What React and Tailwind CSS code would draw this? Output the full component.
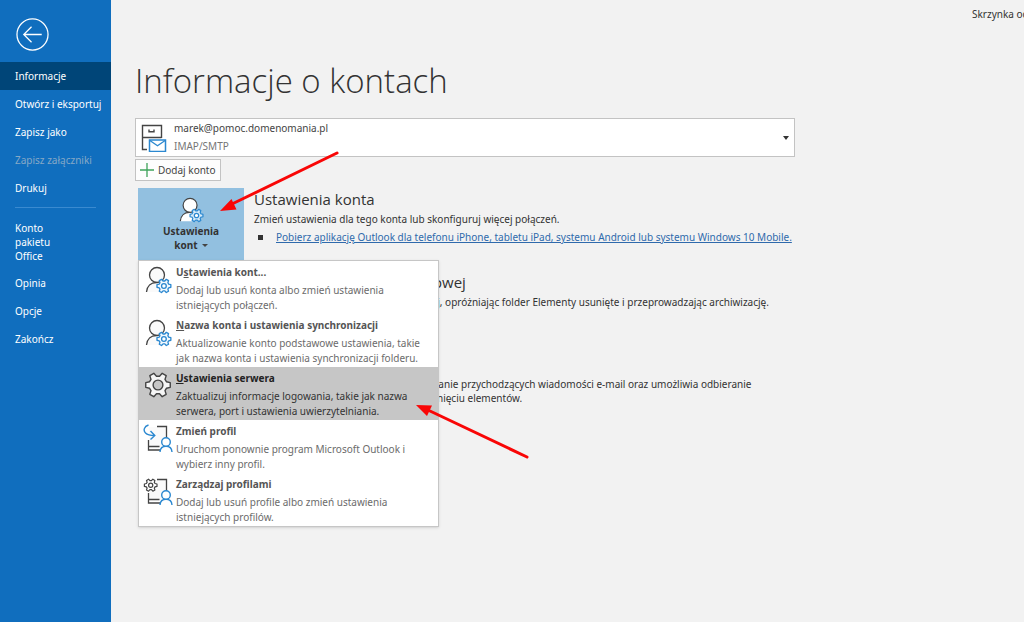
import React from 'react';

const navTop = [
  { label: 'Informacje', active: true },
  { label: 'Otwórz i eksportuj' },
  { label: 'Zapisz jako' },
  { label: 'Zapisz załączniki', disabled: true },
  { label: 'Drukuj' },
];

const navBottom = ['Opinia', 'Opcje', 'Zakończ'];

const GEAR =
  'M10 1.500h4l.8 3.300 2 1.200 3.200-1 2 3.400-2.500 2.300v2.600l2.500 2.300-2 3.400-3.200-1-2 1.200-.8 3.300h-4l-.8-3.300-2-1.200-3.200 1-2-3.400 2.500-2.300v-2.600L2 8.400 4 5l3.200 1 2-1.200z';

function PersonGearIcon({ className, fill, gearFill }) {
  return (
    <svg viewBox="-1 -1 28 30" className={className} fill="none" aria-hidden="true">
      <path d="M1.500 26C2 20 6 16.500 11.500 16.500c3 0 5 1 6.500 2.500v7z" fill={fill} />
      <circle cx="12" cy="9" r="7.500" fill={fill} stroke="#444" strokeWidth="1.300" />
      <path d="M1.500 26C2 20 6 16.500 11.500 16.500" stroke="#444" strokeWidth="1.300" />
      <g transform="translate(11 12) scale(.66) rotate(90 12 12)">
        <path d={GEAR} fill={gearFill} stroke="#2b88d0" strokeWidth="2" strokeLinejoin="round" />
        <circle cx="12" cy="12" r="3.600" fill="#fff" stroke="#2b88d0" strokeWidth="2" />
      </g>
    </svg>
  );
}

function GearIcon({ className }) {
  return (
    <svg viewBox="0 0 24 24" className={className} fill="none" aria-hidden="true">
      <g transform="rotate(90 12 12)">
        <path d={GEAR} fill="#f5f5f5" stroke="#444" strokeWidth="1.200" strokeLinejoin="round" />
        <circle cx="12" cy="12" r="4.200" fill="#c6c6c6" stroke="#444" strokeWidth="1.200" />
      </g>
    </svg>
  );
}

function ProfileIcon({ className, gear }) {
  return (
    <svg viewBox="0 0 30 30" className={className} fill="none" aria-hidden="true">
      <path d="M6 3h17v20H6z" fill="#fafafa" />
      <path d="M14 2.500h9.500V14M5.500 16v10h12M5.500 22.500h11" stroke="#444" strokeWidth="1.300" />
      {gear ? (
        <g transform="translate(.5 1) scale(.6) rotate(90 12 12)">
          <path d={GEAR} fill="#fff" stroke="#444" strokeWidth="2" strokeLinejoin="round" />
          <circle cx="12" cy="12" r="3.500" stroke="#444" strokeWidth="2" />
        </g>
      ) : (
        <path d="M5.500 1C1 2.500 0 6.500 2.500 9c2 2 5.500 2.500 9 2.500M7.500 7l4.300 4.500-4.300 4" stroke="#2b88d0" strokeWidth="1.400" />
      )}
      <path d="M17 28c.3-3.800 2.800-5.700 6-5.700s5.700 1.900 6 5.700" fill="#fff" stroke="#2b88d0" strokeWidth="1.400" />
      <circle cx="23" cy="18" r="4.300" fill="#fff" stroke="#2b88d0" strokeWidth="1.400" />
    </svg>
  );
}

const menuItems = [
  {
    title: 'Ustawienia kont...',
    accessIndex: 1,
    text: ['Dodaj lub usuń konta albo zmień ustawienia', 'istniejących połączeń.'],
    icon: <PersonGearIcon className="h-[30px] w-7" fill="#fafafa" gearFill="#f4f9fd" />,
  },
  {
    title: 'Nazwa konta i ustawienia synchronizacji',
    accessIndex: 0,
    text: ['Aktualizowanie konto podstawowe ustawienia, takie', 'jak nazwa konta i ustawienia synchronizacji folderu.'],
    icon: <PersonGearIcon className="h-[30px] w-7" fill="#fafafa" gearFill="#f4f9fd" />,
  },
  {
    title: 'Ustawienia serwera',
    accessIndex: 0,
    text: ['Zaktualizuj informacje logowania, takie jak nazwa', 'serwera, port i ustawienia uwierzytelniania.'],
    icon: <GearIcon className="h-7 w-7" />,
    active: true,
  },
  {
    title: 'Zmień profil',
    text: ['Uruchom ponownie program Microsoft Outlook i', 'wybierz inny profil.'],
    icon: <ProfileIcon className="h-[30px] w-[30px]" />,
  },
  {
    title: 'Zarządzaj profilami',
    text: ['Dodaj lub usuń profile albo zmień ustawienia', 'istniejących profilów.'],
    icon: <ProfileIcon className="h-[30px] w-[30px]" gear />,
  },
];

function MenuTitle({ title, index }) {
  if (index === undefined) return title;
  return (
    <>
      {title.slice(0, index)}
      <span className="underline">{title[index]}</span>
      {title.slice(index + 1)}
    </>
  );
}

function Sidebar() {
  return (
    <nav className="w-[111px] shrink-0 bg-[#106ebe] text-[10px] leading-[14px] text-white">
      <button type="button" aria-label="Wstecz" className="mt-[18px] ml-4 block">
        <svg viewBox="0 0 34 34" className="h-[33px] w-[33px]" fill="none" stroke="#fff" strokeWidth="1.300" aria-hidden="true">
          <circle cx="17" cy="17" r="16" />
          <path d="M26.500 17H8.500M16 9l-8 8 8 8" />
        </svg>
      </button>
      <div className="mt-[11px] flex flex-col">
        {navTop.map((item) => (
          <button
            key={item.label}
            type="button"
            disabled={item.disabled}
            className={`h-7 pl-[15px] text-left whitespace-nowrap ${item.active ? 'bg-[#004578]' : ''} ${item.disabled ? 'text-[#86a8c6]' : ''}`}
          >
            {item.label}
          </button>
        ))}
      </div>
      <hr className="mx-[15px] mt-[5px] border-[#3a8ad0]" />
      <div className="mt-[11px] flex flex-col">
        <button type="button" className="mb-1 w-16 py-[2px] pl-[15px] text-left">
          Konto pakietu Office
        </button>
        {navBottom.map((label) => (
          <button key={label} type="button" className="h-7 pl-[15px] text-left">
            {label}
          </button>
        ))}
      </div>
    </nav>
  );
}

function AccountPicker() {
  return (
    <div className="flex h-[39px] max-w-[660px] items-center border border-[#c3c3c3] bg-white pr-1 pl-[5px]">
      <svg viewBox="0 0 26 28" className="h-7 w-[26px] shrink-0" fill="none" aria-hidden="true">
        <path d="M6 25.500H1.500v-24h19V14M1.500 13.500h19" stroke="#444" strokeWidth="1.400" />
        <path d="M8 5.500v2.200h5V5.500" stroke="#444" strokeWidth="1.400" />
        <path d="M8.500 16h16v11.500h-16z" fill="#fff" stroke="#2b88d0" strokeWidth="1.500" />
        <path d="M8.500 16.300l8 5.500 8-5.500" stroke="#2b88d0" strokeWidth="1.300" />
      </svg>
      <div className="ml-[7px] flex grow flex-col pb-px text-[10px] leading-[18px]">
        <select aria-label="Konto" className="w-full appearance-none bg-transparent text-[#444]">
          <option>marek@pomoc.domenomania.pl</option>
        </select>
        <span className="text-[#767676]">IMAP/SMTP</span>
      </div>
      <svg viewBox="0 0 8 4" className="h-1 w-2 shrink-0" aria-hidden="true">
        <path d="M1 0h6L4 4z" fill="#333" />
      </svg>
    </div>
  );
}

function AccountMenu() {
  return (
    <div role="menu" className="absolute top-full left-0 w-[301px] border border-[#c6c6c6] bg-white shadow-sm">
      {menuItems.map((item) => (
        <button
          key={item.title}
          type="button"
          role="menuitem"
          className={`flex h-[53px] w-full items-start pt-1 text-left ${item.active ? 'bg-[#c6c6c6] text-[#333]' : 'text-[#6b6b6b]'}`}
        >
          <span className="flex w-[37px] shrink-0 justify-center">{item.icon}</span>
          <span className="text-[10px] leading-[15px] whitespace-nowrap">
            <span className={`mb-[3px] block font-bold ${item.active ? 'text-[#222]' : 'text-[#555]'}`}>
              <MenuTitle title={item.title} index={item.accessIndex} />
            </span>
            <span className="block">{item.text[0]}</span>
            <span className="block">{item.text[1]}</span>
          </span>
        </button>
      ))}
    </div>
  );
}

function Arrows() {
  return (
    <svg viewBox="0 0 400 320" className="pointer-events-none absolute top-[150px] left-[210px] h-[320px] w-[400px]" aria-hidden="true">
      <g stroke="#f90606" strokeWidth="3" strokeLinecap="round">
        <path d="M127 3L22 54M317 307L220 261" />
      </g>
      <path d="M10 61l11.500-12 5 10.500zM206 255l16 .5-5 10.500z" fill="#f90606" />
    </svg>
  );
}

export default function App() {
  return (
    <div className="relative flex min-h-screen overflow-hidden bg-[#f2f2f2] font-['Noto_Sans',sans-serif] text-[#333]">
      <Sidebar />
      <main className="min-w-0 grow pl-6">
        <div className="flex h-7 items-center justify-end">
          <span className="w-[52px] overflow-hidden text-[10px] leading-4 whitespace-nowrap">Skrzynka odbiorcza</span>
        </div>
        <h1 className="mt-7 font-['Open_Sans',sans-serif] text-[33px] leading-[50px] font-light">Informacje o kontach</h1>
        <div className="mt-3">
          <AccountPicker />
        </div>
        <button type="button" className="mt-[2px] flex h-[22px] items-center gap-1 border border-[#c3c3c3] bg-[#fdfdfd] px-1 text-[10px] text-[#444]">
          <svg viewBox="0 0 14 14" className="h-[14px] w-[14px]" stroke="#3fa45b" strokeWidth="1.300" aria-hidden="true">
            <path d="M7 0v14M0 7h14" />
          </svg>
          Dodaj konto
        </button>

        <section className="mt-[7px] flex items-start pl-[3px]">
          <div className="relative w-[106px] shrink-0">
            <button
              type="button"
              aria-haspopup="menu"
              aria-expanded="true"
              className="flex h-[72px] w-full flex-col items-center bg-[#92c0e0] pt-2 text-[10px] leading-[14px] font-bold"
            >
              <PersonGearIcon className="h-7 w-[26px]" fill="#fff" gearFill="#d9ecf9" />
              <span>Ustawienia</span>
              <span className="flex items-center gap-1">
                kont
                <svg viewBox="0 0 6 3" className="h-[3px] w-[6px]" aria-hidden="true">
                  <path d="M0 0h6L3 3z" fill="#444" />
                </svg>
              </span>
            </button>
            <AccountMenu />
          </div>
          <div className="ml-[10px] text-[10px] leading-[14px] whitespace-nowrap">
            <h2 className="font-['Open_Sans',sans-serif] text-[15px] leading-[23px]">Ustawienia konta</h2>
            <p className="leading-4">Zmień ustawienia dla tego konta lub skonfiguruj więcej połączeń.</p>
            <ul className="mt-[2px] leading-4">
              <li className="flex items-center gap-[13px] pl-1">
                <span className="h-[5px] w-[5px] bg-[#333]" />
                <a href="#mobile" className="text-[#2f6aac] underline">
                  Pobierz aplikację Outlook dla telefonu iPhone, tabletu iPad, systemu Android lub systemu Windows 10 Mobile.
                </a>
              </li>
            </ul>
            <h2 className="mt-[26px] font-['Open_Sans',sans-serif] text-[15px] leading-[23px]">Ustawienia skrzynki pocztowej</h2>
            <p className="leading-4">
              Zarządzaj wielkością skrzynki pocztowej, opróżniając folder Elementy usunięte i przeprowadzając archiwizację.
            </p>
            <h2 className="mt-11 font-['Open_Sans',sans-serif] text-[15px] leading-[23px]">Reguły i alerty</h2>
            <p>
              Reguły i alerty umożliwią też organizowanie przychodzących wiadomości e-mail oraz umożliwia odbieranie
              <br />
              aktualizacji po dodaniu, edycji albo usunięciu elementów.
            </p>
          </div>
        </section>
      </main>
      <Arrows />
    </div>
  );
}
